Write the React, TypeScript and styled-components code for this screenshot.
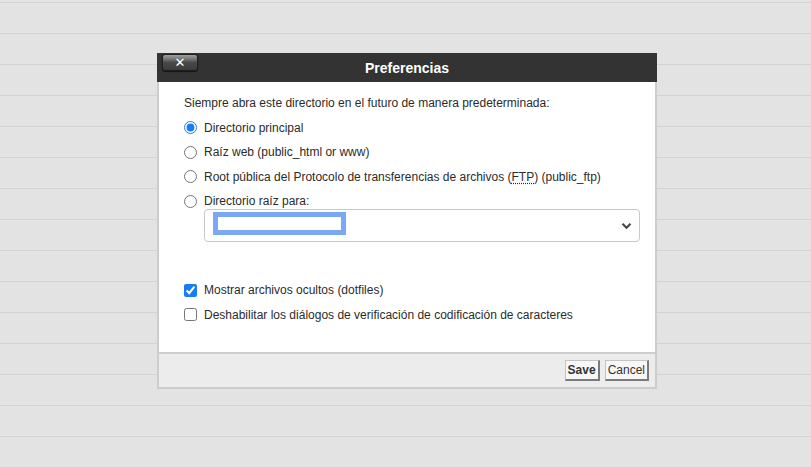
import styled, { createGlobalStyle } from 'styled-components';

const GlobalStyle = createGlobalStyle`
  html, body {
    margin: 0;
    padding: 0;
  }
  body {
    font-family: "Liberation Sans", Arial, sans-serif;
    font-size: 12px;
    color: #2b2b2b;
    background-color: #e3e3e3;
    background-image: repeating-linear-gradient(
      to bottom,
      transparent 0px,
      transparent 2px,
      #d3d3d3 2px,
      #d3d3d3 3px,
      transparent 3px,
      transparent 31px
    );
    min-height: 468px;
  }
`;

const Page = styled.div`
  display: flex;
  justify-content: center;
  padding: 53px 0 0 3px;
  min-height: 468px;
  box-sizing: border-box;
`;

const Dialog = styled.div`
  width: 500px;
  box-sizing: border-box;
  border: 2px solid #cdcdcd;
  border-top: none;
  background: #fff;
  align-self: flex-start;
`;

const TitleBar = styled.div`
  position: relative;
  height: 29px;
  margin: 0 -2px;
  background: #333333;
  display: flex;
  align-items: center;
  justify-content: center;
`;

const Title = styled.div`
  color: #fff;
  font-weight: bold;
  font-size: 14px;
  padding-top: 1px;
`;

const CloseButton = styled.button`
  position: absolute;
  left: 5px;
  top: 1px;
  width: 36px;
  height: 17px;
  padding: 0;
  border: 1px solid #1e1e1e;
  border-radius: 3px;
  background: linear-gradient(to bottom, #a0a0a0 0%, #707070 30%, #4a4a4a 50%, #3b3b3b 100%);
  box-shadow: 0 1px 1px rgba(0, 0, 0, 0.6);
  color: #fff;
  font-family: "DejaVu Sans", sans-serif;
  font-weight: bold;
  font-size: 13px;
  line-height: 13px;
  display: flex;
  align-items: center;
  justify-content: center;
`;

const Body = styled.div`
  padding: 13px 16px 29px 25px;
  display: flex;
  flex-direction: column;
`;

const Group = styled.div`
  display: flex;
  flex-direction: column;
  gap: 8.5px;
`;

const Row = styled.label`
  display: flex;
  align-items: center;
  height: 16px;
  gap: 7px;
  white-space: nowrap;
`;

const Radio = styled.input.attrs({ type: 'radio' })`
  margin: 0;
  width: 13px;
  height: 13px;
  accent-color: #1a7cf5;
`;

const Check = styled.input.attrs({ type: 'checkbox' })`
  margin: 0;
  width: 13px;
  height: 13px;
  accent-color: #1a7cf5;
`;

const Abbr = styled.abbr`
  text-decoration: underline dotted;
  text-underline-offset: 2px;
`;

const SelectBox = styled.div`
  margin-left: 20px;
  width: 436px;
  height: 33px;
  box-sizing: border-box;
  border: 1px solid #c9c9c9;
  border-radius: 4px;
  display: flex;
  align-items: center;
  justify-content: space-between;
  padding: 0 7px 0 8px;
`;

const Redacted = styled.span`
  width: 133px;
  height: 23px;
  box-sizing: border-box;
  border: 5px solid #7aa8f7;
  background: #fff;
  margin-top: -4px;
`;

const Checks = styled(Group)`
  margin-top: 40px;
`;

const Footer = styled.div`
  border-top: 2px solid #cdcdcd;
  background: #ececec;
  height: 35px;
  display: flex;
  justify-content: flex-end;
  align-items: flex-start;
  padding: 6px 6px 0 0;
  gap: 5px;
  box-sizing: border-box;
`;

const Button = styled.button<{ $primary?: boolean }>`
  height: 21px;
  padding: 0 2px;
  font-family: "Liberation Sans", Arial, sans-serif;
  font-size: 12px;
  font-weight: ${(p) => (p.$primary ? 'bold' : 'normal')};
  color: #333;
  background: #f7f7f7;
  border: 1px solid #c4c4c4;
  border-right: 2px solid #7a7a7a;
  border-bottom: 2px solid #7a7a7a;
  border-radius: 0;
`;

const App = () => {
  return (
    <>
      <GlobalStyle />
      <Page>
        <Dialog>
          <TitleBar>
            <CloseButton>✕</CloseButton>
            <Title>Preferencias</Title>
          </TitleBar>
          <Body>
            <Group>
              <Row as="div">Siempre abra este directorio en el futuro de manera predeterminada:</Row>
              <Row>
                <Radio name="dir" defaultChecked />
                Directorio principal
              </Row>
              <Row>
                <Radio name="dir" />
                Raíz web (public_html or www)
              </Row>
              <Row>
                <Radio name="dir" />
                <span>
                  Root pública del Protocolo de transferencias de archivos (<Abbr>FTP</Abbr>) (public_ftp)
                </span>
              </Row>
              <Row>
                <Radio name="dir" />
                Directorio raíz para:
              </Row>
            </Group>
            <SelectBox>
              <Redacted />
              <svg width="11" height="8" viewBox="0 0 11 8">
                <path d="M1.5 1.8 L5.5 5.8 L9.5 1.8" fill="none" stroke="#444" strokeWidth="2" />
              </svg>
            </SelectBox>
            <Checks>
              <Row>
                <Check defaultChecked />
                Mostrar archivos ocultos (dotfiles)
              </Row>
              <Row>
                <Check />
                Deshabilitar los diálogos de verificación de codificación de caracteres
              </Row>
            </Checks>
          </Body>
          <Footer>
            <Button $primary>Save</Button>
            <Button>Cancel</Button>
          </Footer>
        </Dialog>
      </Page>
    </>
  );
};

export default App;
